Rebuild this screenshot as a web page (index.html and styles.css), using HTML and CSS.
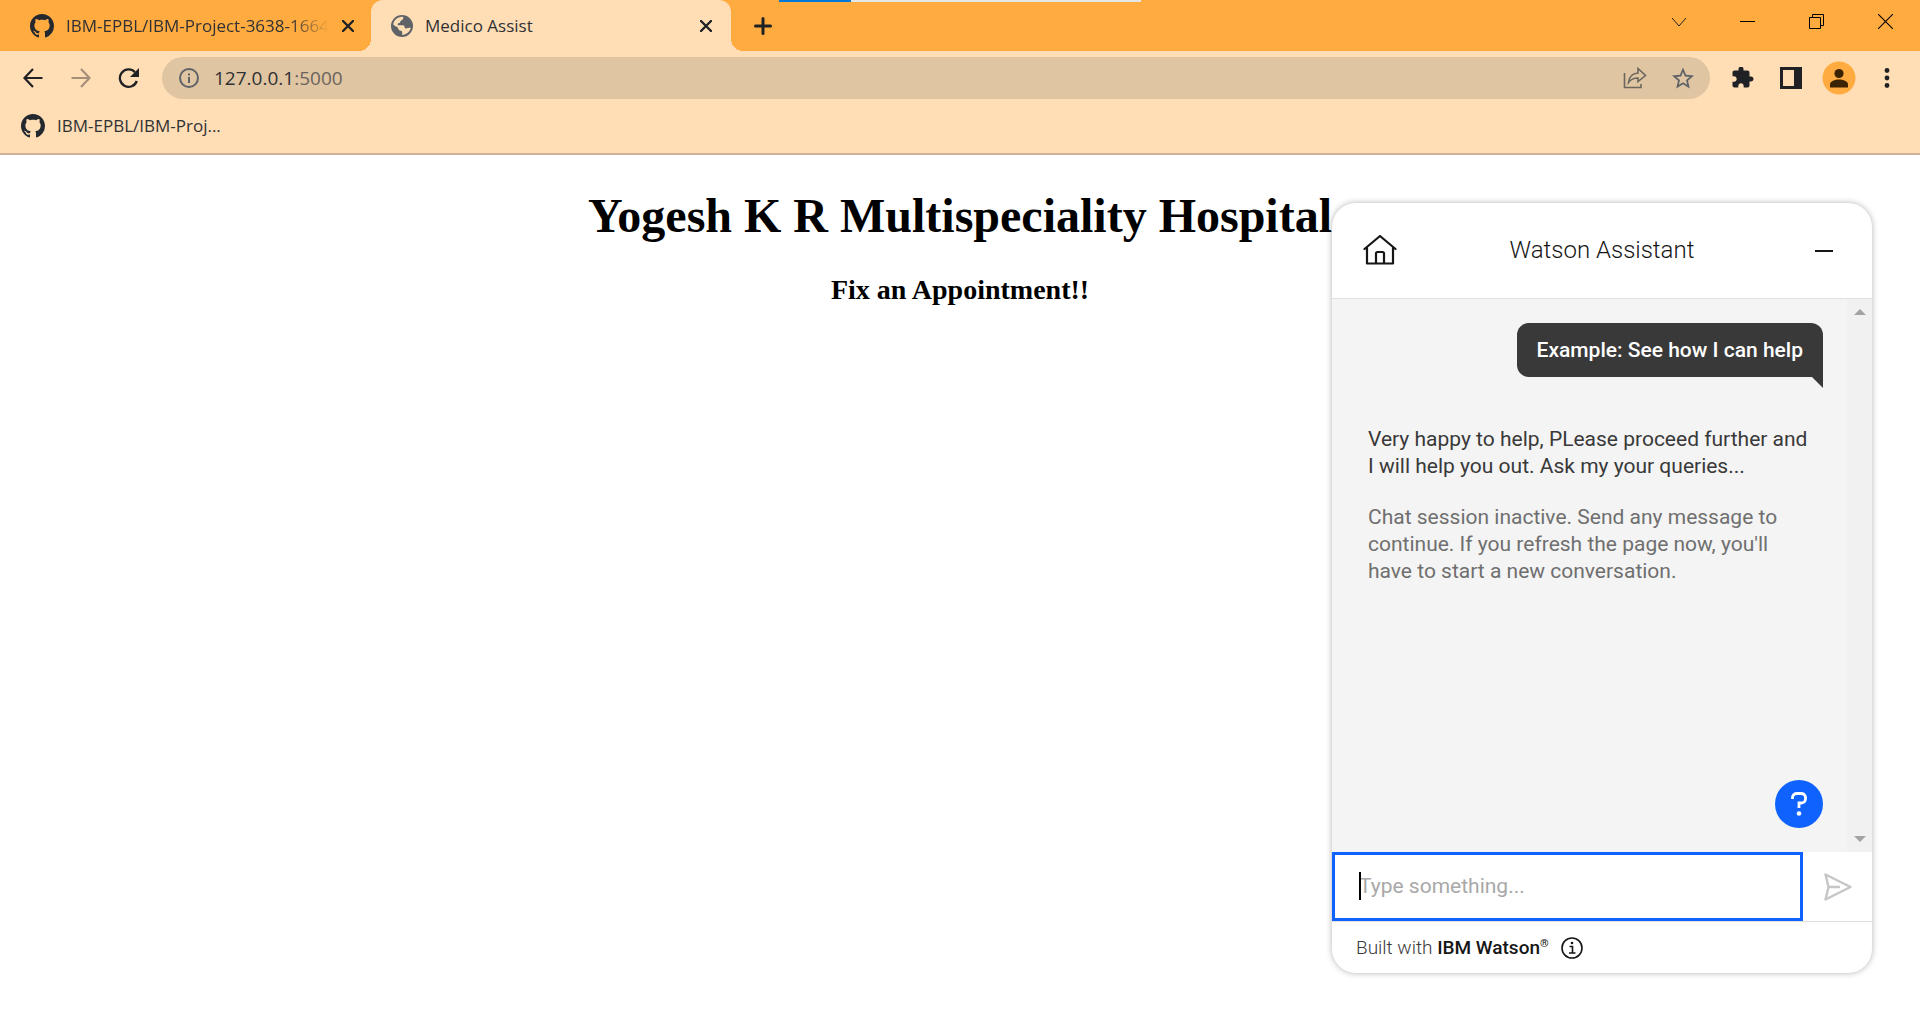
FILE: index.html
```html
<!DOCTYPE html>
<html lang="en">
<head>
<meta charset="utf-8">
<meta name="viewport" content="width=device-width, initial-scale=1">
<title>Medico Assist</title>
<link rel="stylesheet" href="styles.css">
</head>
<body>
<svg class="defs" aria-hidden="true">
  <symbol id="github" viewBox="0 0 16 16"><path d="M8 0C3.58 0 0 3.58 0 8c0 3.54 2.29 6.53 5.47 7.59.4.07.55-.17.55-.38 0-.19-.01-.82-.01-1.49-2.01.37-2.53-.49-2.69-.94-.09-.23-.48-.94-.82-1.13-.28-.15-.68-.52-.01-.53.63-.01 1.08.58 1.23.82.72 1.21 1.87.87 2.33.66.07-.52.28-.87.51-1.07-1.78-.2-3.64-.89-3.64-3.95 0-.87.31-1.59.82-2.15-.08-.2-.36-1.02.08-2.12 0 0 .67-.21 2.2.82.64-.18 1.32-.27 2-.27s1.36.09 2 .27c1.53-1.04 2.2-.82 2.2-.82.44 1.1.16 1.92.08 2.12.51.56.82 1.27.82 2.15 0 3.07-1.87 3.75-3.65 3.95.29.25.54.73.54 1.48 0 1.07-.01 1.93-.01 2.2 0 .21.15.46.55.38A8.01 8.01 0 0 0 16 8c0-4.42-3.58-8-8-8z"/></symbol>
  <symbol id="cross" viewBox="0 0 12 12"><path d="M1 1l10 10M11 1L1 11" fill="none" stroke="#202124" stroke-width="2.4" stroke-linecap="round"/></symbol>
</svg>

<header class="browser">
  <div class="tabstrip">
    <div class="tab tab-back">
      <svg class="favicon"><use href="#github"/></svg>
      <span class="tab-title">IBM-EPBL/IBM-Project-3638-1664</span>
      <button class="tab-close" aria-label="Close tab"><svg width="12" height="12"><use href="#cross"/></svg></button>
    </div>
    <div class="tab tab-active">
      <svg class="globe" viewBox="2 2 20 20"><circle cx="12" cy="12" r="10" fill="#5f6368"/><path fill="#ffdeb6" d="M13.2 3.8c0 1.800-.4 2.400-1.500 2.900-1.300.600-1.100 1.500-1.700 2.300-.6.600-1.900.200-2 1.300 0 1 1 1 2 1h3c1.200 0 1.300 1 1.400 2 .2 1 1 1.200 2 .8 1-.6 2.200-.8 3.600-.4-.8 3.600-4 6.400-7.900 6.400-.1-1.600.7-2.500-.5-3.500-.9-.7-2.100-.3-2.700-1.500-.5-1-.5-1.700-1.300-2.300L3.900 11.300C4.200 7 7.800 3.700 12 3.700z" /><path fill="#5f6368" d="M3.900 10.500l4.600 4.500c.4 2.500 2.300 1.400 2.500 3.500v2.400l-4-1.400-3.500-4.500z"/></svg>
      <span class="tab-title">Medico Assist</span>
      <button class="tab-close" aria-label="Close tab"><svg width="12" height="12"><use href="#cross"/></svg></button>
    </div>
    <button class="new-tab" aria-label="New tab"><svg width="18" height="18" viewBox="0 0 18 18"><path d="M9 1.500v15M1.500 9h15" stroke="#202124" stroke-width="3" stroke-linecap="round"/></svg></button>
    <div class="window-controls">
      <button aria-label="Search tabs"><svg width="16" height="10" viewBox="0 0 16 10"><path d="M1 1l7 8 7-8" fill="none" stroke="#202020" stroke-width="1"/></svg></button>
      <button aria-label="Minimize"><svg width="15" height="1" viewBox="0 0 15 1"><path d="M0 0h15v1H0z"/></svg></button>
      <button aria-label="Restore"><svg width="15" height="15" viewBox="0 0 15 15"><path d="M.5 3.500h11v11H.5zM3.500 3.500v-3h11v11h-3" fill="none" stroke="#000"/></svg></button>
      <button aria-label="Close"><svg width="15" height="15" viewBox="0 0 15 15"><path d="M0 0l15 15M15 0L0 15" stroke="#000" stroke-width="1.100"/></svg></button>
    </div>
    <div class="progress"></div>
  </div>

  <div class="toolbar">
    <button class="tool" aria-label="Back"><svg width="20" height="20" viewBox="0 0 20 20"><path d="M19.500 10H1.500M10 1L1.500 10l8.500 9" fill="none" stroke="#202124" stroke-width="2.200"/></svg></button>
    <button class="tool" aria-label="Forward"><svg width="20" height="20" viewBox="0 0 20 20"><path d="M.5 10h18M10 1l8.500 9-8.500 9" fill="none" stroke="#a68f79" stroke-width="2.200"/></svg></button>
    <button class="tool" aria-label="Reload"><svg width="22" height="20" viewBox="0 0 22 20"><path d="M18.800 13A8.700 8.700 0 1 1 17 4.200" fill="none" stroke="#202124" stroke-width="2.300"/><path d="M21 0v9h-9z" fill="#202124"/></svg></button>
    <div class="omnibox">
      <svg class="site-info" width="20" height="20" viewBox="0 0 20 20"><circle cx="10" cy="10" r="9" fill="none" stroke="#5f6368" stroke-width="2"/><path d="M9 9h2v6H9zM9 5.500h2v2H9z" fill="#5f6368"/></svg>
      <span class="url">127.0.0.1<span class="port">:5000</span></span>
      <button class="tool" aria-label="Share"><svg width="24" height="22" viewBox="0 0 24 22"><g fill="none" stroke="#6b675f" stroke-width="1.600"><path d="M1.500 6v14.500h16.500V17"/><path d="M5.500 15.500C6 9.500 10 6.500 15 6V1.500L22.500 8.500 15 14.500V11c-4 0-7 1-9.500 4.500z"/></g></svg></button>
      <button class="tool" aria-label="Bookmark"><svg width="22" height="22" viewBox="2 1.500 20 20"><path fill="#5f6368" d="M22 9.240l-7.190-.62L12 2 9.190 8.630 2 9.240l5.460 4.730L5.820 21 12 17.270 18.180 21l-1.630-7.030L22 9.240zM12 15.400l-3.760 2.270 1-4.280-3.320-2.880 4.380-.38L12 6.100l1.710 4.040 4.380.38-3.320 2.880 1 4.280L12 15.400z"/></svg></button>
    </div>
    <button class="tool" aria-label="Extensions"><svg width="22" height="22" viewBox="1.500 1.500 22 22"><path fill="#202124" d="M20.500 11H19V7c0-1.100-.9-2-2-2h-4V3.500C13 2.120 11.880 1 10.500 1S8 2.120 8 3.500V5H4c-1.100 0-1.990.9-1.990 2v3.800H3.500c1.490 0 2.700 1.210 2.700 2.700s-1.210 2.700-2.700 2.700H2V20c0 1.100.9 2 2 2h3.800v-1.500c0-1.490 1.210-2.700 2.700-2.700 1.490 0 2.700 1.210 2.700 2.700V22H17c1.100 0 2-.9 2-2v-4h1.500c1.380 0 2.500-1.120 2.500-2.500S21.880 11 20.500 11z"/></svg></button>
    <button class="tool" aria-label="Side panel"><svg width="22" height="22" viewBox="0 0 22 22"><path fill="#202124" fill-rule="evenodd" d="M0 0h22v22H0zM3 3h11v16H3z"/></svg></button>
    <button class="tool" aria-label="Profile"><svg width="34" height="34" viewBox="0 0 34 34"><circle cx="17" cy="17" r="16.500" fill="#ffab40"/><circle cx="17" cy="12.500" r="4.600" fill="#3b2200"/><path d="M8 26.500v-3c0-3.500 5-5 9-5s9 1.500 9 5v3z" fill="#3b2200"/></svg></button>
    <button class="tool" aria-label="Menu"><svg width="6" height="20" viewBox="0 0 6 20"><g fill="#202124"><circle cx="3" cy="2.500" r="2.400"/><circle cx="3" cy="10" r="2.400"/><circle cx="3" cy="17.500" r="2.400"/></g></svg></button>
  </div>

  <nav class="bookmarks">
    <a href="#"><svg class="favicon"><use href="#github"/></svg>IBM-EPBL/IBM-Proj...</a>
  </nav>
</header>

<main class="page">
  <h1>Yogesh K R Multispeciality Hospital</h1>
  <h3>Fix an Appointment!!</h3>

  <section class="chat" aria-label="Watson Assistant">
    <header class="chat-header">
      <button aria-label="Home"><svg width="34" height="32" viewBox="0 0 34 32"><g fill="none" stroke="#161616" stroke-width="2.200" stroke-linejoin="round" stroke-linecap="round"><path d="M1.500 14L17 1l15.500 13M4 13v15.500h26V13"/><path d="M13 28V18.500q0-1.500 1.500-1.500h5q1.500 0 1.500 1.500V28"/></g></svg></button>
      <h2>Watson Assistant</h2>
      <button aria-label="Minimize chat"><svg width="18" height="2" viewBox="0 0 18 2"><path d="M0 0h18v2H0z" fill="#161616"/></svg></button>
    </header>
    <div class="chat-body">
      <div class="messages">
        <p class="bubble">Example: See how I can help</p>
        <p class="reply">Very happy to help, PLease proceed further and<br>I will help you out. Ask my your queries...</p>
        <p class="notice">Chat session inactive. Send any message to<br>continue. If you refresh the page now, you'll<br>have to start a new conversation.</p>
        <button class="help" aria-label="Help"><svg width="16" height="24" viewBox="0 0 16 24"><path d="M1.500 7V5.500C1.500 3 3.500 1.500 6 1.500h4c2.500 0 4.500 1.500 4.500 4V7c0 2.500-2 4-4.500 4H8v5" fill="none" stroke="#fff" stroke-width="2.800"/><circle cx="8" cy="21.500" r="2.300" fill="#fff"/></svg></button>
      </div>
      <div class="scrollbar"><i class="arrow-up"></i><i class="arrow-down"></i></div>
    </div>
    <form class="composer">
      <div class="field">
        <input type="text" aria-label="Message" placeholder="Type something...">
        <span class="caret"></span>
      </div>
      <button type="button" aria-label="Send"><svg width="28" height="28" viewBox="0 0 28 28"><path d="M1.500 1.500L26.500 14l-25 12.500L4.500 14zM4.500 14H16" fill="none" stroke="#c6c6c6" stroke-width="2.400" stroke-linejoin="round"/></svg></button>
    </form>
    <footer class="chat-footer">
      <span>Built with <b>IBM Watson<sup>®</sup></b></span>
      <button aria-label="About"><svg width="22" height="22" viewBox="0 0 22 22"><circle cx="11" cy="11" r="10" fill="none" stroke="#161616" stroke-width="1.600"/><path d="M8.500 9.500h3V16M8 16h6.500" fill="none" stroke="#161616" stroke-width="1.600"/><circle cx="11" cy="6" r="1.300" fill="#161616"/></svg></button>
    </footer>
  </section>
</main>
</body>
</html>
```
FILE: styles.css
```css
* { box-sizing: border-box; }

body {
  margin: 0;
  min-height: 100vh;
  display: flex;
  flex-direction: column;
  background: #fff;
  overflow: hidden;
}

button {
  display: flex;
  align-items: center;
  justify-content: center;
  padding: 0;
  border: 0;
  background: none;
}

svg { flex: none; }

.defs { position: absolute; width: 0; height: 0; }

/* Browser frame */
.browser {
  background: #ffdeb6;
  border-bottom: 2px solid #cdb293;
  font: 17px/24px "Open Sans", "Noto Sans", sans-serif;
  color: #303134;
}

.tabstrip {
  position: relative;
  display: flex;
  height: 51px;
  background: #ffab40;
}

.tab {
  display: flex;
  align-items: center;
  gap: 12px;
  height: 51px;
}

.tab-back { width: 371px; padding: 0 16px 0 30px; }

.tab-active {
  position: relative;
  width: 360px;
  padding: 0 18px 0 20px;
  background: #ffdeb6;
  border-radius: 12px 12px 0 0;
}

.tab-active::before,
.tab-active::after {
  content: "";
  position: absolute;
  bottom: 0;
  width: 12px;
  height: 12px;
}

.tab-active::before {
  right: 100%;
  background: radial-gradient(circle at 0 0, transparent 12px, #ffdeb6 12px);
}

.tab-active::after {
  left: 100%;
  background: radial-gradient(circle at 100% 0, transparent 12px, #ffdeb6 12px);
}

.favicon { width: 24px; height: 24px; fill: #24292f; }
.globe { width: 22px; height: 22px; }

.tab-title {
  flex: 1;
  min-width: 0;
  overflow: hidden;
  white-space: nowrap;
}

.tab-back .tab-title {
  mask-image: linear-gradient(to left, transparent, #000 40px);
}

.tab-close { width: 14px; height: 24px; }
.new-tab { width: 64px; }

.window-controls {
  display: flex;
  margin-left: auto;
  padding-bottom: 8px;
}

.window-controls button { width: 69px; }

.progress {
  position: absolute;
  top: 0;
  left: 779px;
  width: 362px;
  height: 2px;
  background: linear-gradient(to right, #0078d7 20%, #e6e6e6 20%);
}

.toolbar {
  display: flex;
  align-items: center;
  height: 54px;
  padding: 0 9px;
}

.tool { flex: none; width: 48px; height: 42px; }

.omnibox {
  flex: 1;
  display: flex;
  align-items: center;
  height: 42px;
  margin: 0 9px;
  padding: 0 3px 0 17px;
  border-radius: 21px;
  background: #dfc5a2;
}

.url { flex: 1; padding-left: 15px; font-size: 19px; }
.port { color: #6a645c; }

.bookmarks { height: 48px; padding: 9px 21px; }

.bookmarks a {
  display: inline-flex;
  gap: 12px;
  color: inherit;
  text-decoration: none;
}

/* Hospital page */
.page {
  flex: 1;
  position: relative;
  padding-top: 33px;
  font-family: "Liberation Serif", "Times New Roman", serif;
  text-align: center;
}

h1 { margin: 0; font-size: 48px; line-height: 56px; }
h3 { margin: 30px 0 0; font-size: 28px; line-height: 32px; }

/* Chat window floating over the page */
.chat {
  position: absolute;
  top: 48px;
  right: 48px;
  bottom: 45px;
  width: 540px;
  display: flex;
  flex-direction: column;
  overflow: hidden;
  border-radius: 24px;
  background: #fff;
  box-shadow: 0 0 6px rgba(0, 0, 0, 0.3);
  font: 21px/27px Roboto, "Liberation Sans", sans-serif;
  text-align: left;
  color: #393939;
}

.chat-header {
  display: flex;
  align-items: center;
  height: 96px;
  border-bottom: 1px solid #e0e0e0;
}

.chat-header button { width: 96px; height: 72px; }

.chat-header h2 {
  flex: 1;
  margin: 0;
  font-size: 24px;
  font-weight: 300;
  text-align: center;
  color: #161616;
}

.chat-body { flex: 1; display: flex; min-height: 0; background: #f4f4f4; }

.messages {
  flex: 1;
  display: flex;
  flex-direction: column;
  padding: 24px 24px 24px 36px;
}

.messages p { margin: 0; white-space: nowrap; }

.messages .bubble {
  position: relative;
  align-self: flex-end;
  margin-bottom: 49px;
  padding: 14px 20px 13px;
  border-radius: 12px 12px 0 12px;
  background: #393939;
  color: #fff;
  font-weight: 500;
}

.bubble::after {
  content: "";
  position: absolute;
  top: 100%;
  right: 0;
  border-top: 11px solid #393939;
  border-left: 11px solid transparent;
}

.messages .notice { margin-top: 24px; color: #6f6f6f; }

.help {
  align-self: flex-end;
  width: 48px;
  height: 48px;
  margin-top: auto;
  border-radius: 50%;
  background: #0f62fe;
}

.scrollbar {
  display: flex;
  flex-direction: column;
  align-items: center;
  justify-content: space-between;
  width: 25px;
  padding: 10px 0;
  background: #f1f1f1;
}

.arrow-up, .arrow-down {
  border: 6px solid transparent;
}

.arrow-up { border-top: 0; border-bottom-color: #a3a3a3; }
.arrow-down { border-bottom: 0; border-top-color: #a3a3a3; }

.composer {
  display: flex;
  height: 70px;
  border-bottom: 1px solid #e0e0e0;
}

.field { flex: 1; position: relative; display: flex; }

.field input {
  flex: 1;
  min-width: 0;
  padding: 0 24px;
  border: 3px solid #0f62fe;
  outline: 0;
  background: #fff;
  font: inherit;
  color: #161616;
}

.field input::placeholder { color: #a8a8a8; opacity: 1; }

.caret {
  position: absolute;
  top: 20px;
  left: 27px;
  width: 2px;
  height: 28px;
  background: #000;
}

.composer button { width: 69px; }

.chat-footer {
  display: flex;
  align-items: center;
  gap: 12px;
  height: 51px;
  padding: 0 24px;
  font-size: 19px;
  font-weight: 300;
}

.chat-footer b { font-weight: 500; color: #161616; }
.chat-footer sup { font-size: 11px; line-height: 0; }
```
